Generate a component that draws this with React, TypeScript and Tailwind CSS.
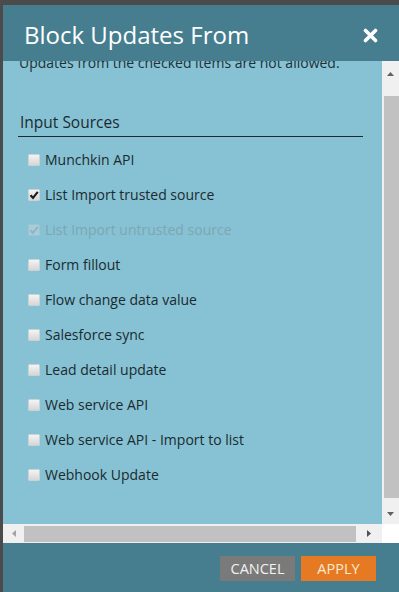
import React from "react";

type Item = { label: string; checked?: boolean; disabled?: boolean };

const items: Item[] = [
  { label: "Munchkin API" },
  { label: "List Import trusted source", checked: true },
  { label: "List Import untrusted source", checked: true, disabled: true },
  { label: "Form fillout" },
  { label: "Flow change data value" },
  { label: "Salesforce sync" },
  { label: "Lead detail update" },
  { label: "Web service API" },
  { label: "Web service API - Import to list" },
  { label: "Webhook Update" },
];

function Box({ checked, disabled }: { checked?: boolean; disabled?: boolean }) {
  return (
    <div
      className={
        "w-[12px] h-[12px] shrink-0 rounded-[1px] flex items-center justify-center border " +
        (disabled
          ? "bg-[#a9cdd8] border-[#9cc3cf]"
          : "bg-gradient-to-b from-[#f4f4f4] to-[#d6d6d6] border-[#c9d3d6]")
      }
    >
      {checked && (
        <svg width="10" height="10" viewBox="0 0 10 10">
          <path
            d="M1.5 5.2 L4 7.8 L8.8 1.8"
            fill="none"
            stroke={disabled ? "#8fb6c2" : "#1b1b1b"}
            strokeWidth="2.1"
          />
        </svg>
      )}
    </div>
  );
}

export default function App() {
  return (
    <div className="w-[399px] h-[592px] bg-[#4b4b4b] pt-[5px] pl-[3px] overflow-hidden font-['Open_Sans',sans-serif]">
      <div className="flex flex-col h-full">
        {/* header */}
        <div className="h-[56px] shrink-0 bg-[#467e8f] flex items-center justify-between pl-[21px] pr-[21px]">
          <span className="text-white text-[24px] leading-none mt-[3px]">Block Updates From</span>
          <svg width="15" height="15" viewBox="0 0 15 15" className="mt-[5px]">
            <path d="M2.5 2.5 L12.5 12.5 M12.5 2.5 L2.5 12.5" stroke="#ffffff" strokeWidth="3.6" strokeLinecap="round" />
          </svg>
        </div>
        {/* body */}
        <div className="h-[482px] shrink-0 grid grid-cols-[1fr_17px] grid-rows-[463px_19px]">
          <div className="bg-[#86c2d3] overflow-hidden">
            <div className="mt-[-8px] pl-[16px] pr-[20px]">
              <div className="text-[14px] leading-[19px] text-[#1f2f36]">
                Updates from the checked items are not allowed.
              </div>
              <div className="mt-[40px] mx-[-1px] pl-[2px] border-b border-[#1e2a2e] text-[15.5px] leading-[21px] pb-[3px] text-[#1c2a30]">
                Input Sources
              </div>
              <div className="mt-[13px] flex flex-col gap-[16px] pl-[9px]">
                {items.map((it) => (
                  <div key={it.label} className="h-[19px] flex items-center gap-[5px]">
                    <Box checked={it.checked} disabled={it.disabled} />
                    <span
                      className={
                        "text-[14px] leading-[19px] whitespace-nowrap " +
                        (it.disabled ? "text-[#7ea6b2]" : "text-[#1c2a30]")
                      }
                    >
                      {it.label}
                    </span>
                  </div>
                ))}
              </div>
            </div>
          </div>
          {/* vertical scrollbar */}
          <div className="bg-[#f0f0f0] flex flex-col items-center">
            <div className="h-[24px] w-full flex items-center justify-center pt-[1px]">
              <svg width="7" height="4" viewBox="0 0 7 4">
                <path d="M0 4 L3.5 0 L7 4 Z" fill="#606060" />
              </svg>
            </div>
            <div className="w-[15px] ml-[2px] self-start h-[402px] mt-[11px] bg-[#c1c1c1]" />
            <div className="flex-1 w-full flex items-end justify-center pb-[8px]">
              <svg width="7" height="4" viewBox="0 0 7 4">
                <path d="M0 0 L7 0 L3.5 4 Z" fill="#606060" />
              </svg>
            </div>
          </div>
          {/* horizontal scrollbar */}
          <div className="bg-[#f0f0f0] flex items-center">
            <div className="w-[21px] h-full flex items-center justify-center">
              <svg width="4" height="7" viewBox="0 0 4 7">
                <path d="M4 0 L0 3.5 L4 7 Z" fill="#a3a3a3" />
              </svg>
            </div>
            <div className="w-[332px] h-[16px] bg-[#c1c1c1]" />
            <div className="flex-1 h-full flex items-center justify-center">
              <svg width="4" height="7" viewBox="0 0 4 7">
                <path d="M0 0 L4 3.5 L0 7 Z" fill="#505050" />
              </svg>
            </div>
          </div>
          <div className="bg-white" />
        </div>
        {/* footer */}
        <div className="flex-1 bg-[#467e8f] flex justify-end items-center gap-[6px] pr-[23px] pt-[2px]">
          <div className="w-[75px] h-[25px] bg-[#7a7a7a] text-[#f2f2f2] text-[14.5px] flex items-center justify-center">
            CANCEL
          </div>
          <div className="w-[75px] h-[25px] bg-[#e57a22] text-[#fde9cf] text-[14.5px] flex items-center justify-center">
            APPLY
          </div>
        </div>
      </div>
    </div>
  );
}
